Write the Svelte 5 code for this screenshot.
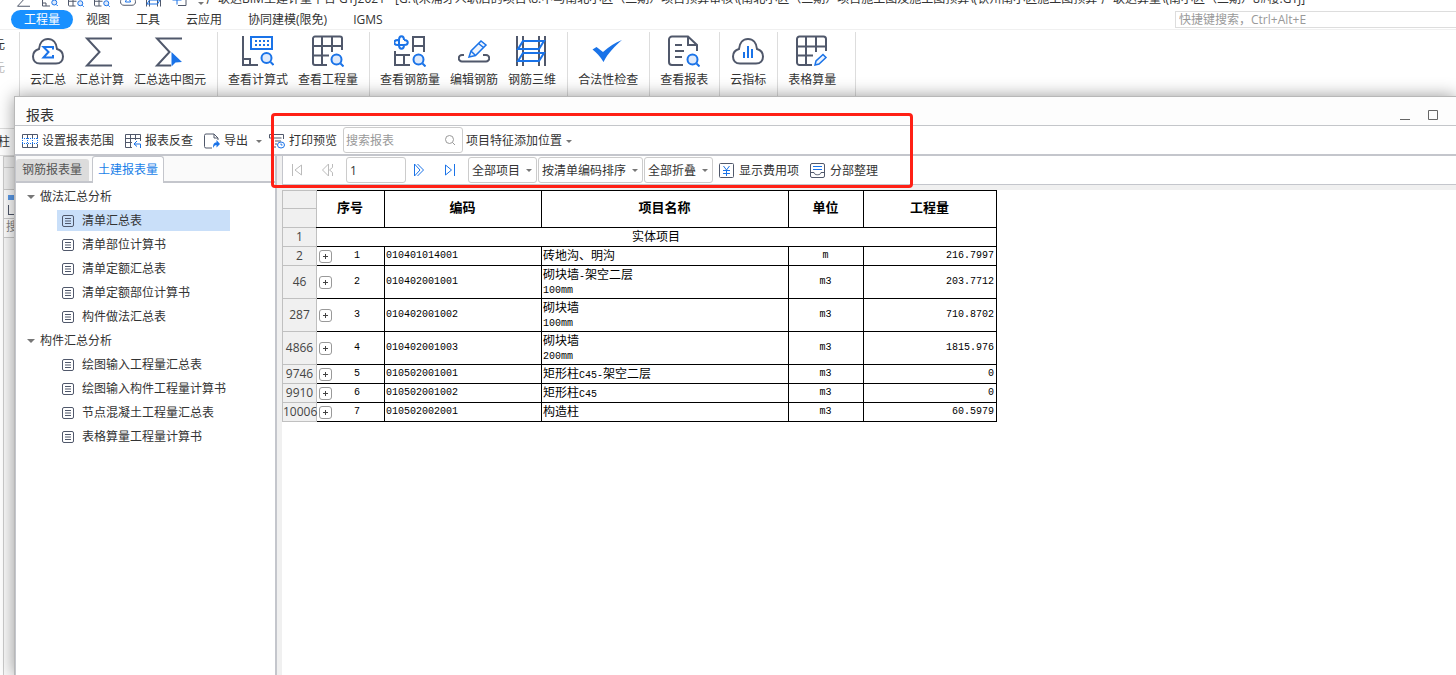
<script lang="ts">
	const quickIcons = ['sum', 'calc', 'grid', 'grid', 'cloud', 'rebar3d', 'addbox'];
	const menus = ['工程量', '视图', '工具', '云应用', '协同建模(限免)', 'IGMS'];

	const ribbon = [
		[
			{ icon: 'cloudsum', label: '云汇总' },
			{ icon: 'sum', label: '汇总计算' },
			{ icon: 'sumselect', label: '汇总选中图元' },
		],
		[
			{ icon: 'calc', label: '查看计算式' },
			{ icon: 'grid', label: '查看工程量' },
		],
		[
			{ icon: 'rebar', label: '查看钢筋量' },
			{ icon: 'edit', label: '编辑钢筋' },
			{ icon: 'rebar3d', label: '钢筋三维' },
		],
		[{ icon: 'check', label: '合法性检查' }],
		[{ icon: 'report', label: '查看报表' }],
		[{ icon: 'cloudstat', label: '云指标' }],
		[{ icon: 'tablepen', label: '表格算量' }],
	];

	const tree = [
		{
			label: '做法汇总分析',
			items: ['清单汇总表', '清单部位计算书', '清单定额汇总表', '清单定额部位计算书', '构件做法汇总表'],
		},
		{
			label: '构件汇总分析',
			items: ['绘图输入工程量汇总表', '绘图输入构件工程量计算书', '节点混凝土工程量汇总表', '表格算量工程量计算书'],
		},
	];

	const rows = [
		{ line: 2, no: 1, code: '010401014001', name: ['砖地沟、明沟'], unit: 'm', qty: '216.7997' },
		{ line: 46, no: 2, code: '010402001001', name: ['砌块墙-架空二层', '100mm'], unit: 'm3', qty: '203.7712' },
		{ line: 287, no: 3, code: '010402001002', name: ['砌块墙', '100mm'], unit: 'm3', qty: '710.8702' },
		{ line: 4866, no: 4, code: '010402001003', name: ['砌块墙', '200mm'], unit: 'm3', qty: '1815.976' },
		{ line: 9746, no: 5, code: '010502001001', name: ['矩形柱C45-架空二层'], unit: 'm3', qty: '0' },
		{ line: 9910, no: 6, code: '010502001002', name: ['矩形柱C45'], unit: 'm3', qty: '0' },
		{ line: 10006, no: 7, code: '010502002001', name: ['构造柱'], unit: 'm3', qty: '60.5979' },
	];

	let activeMenu = $state('工程量');
	let activeTab = $state('土建报表量');
	let selected = $state('清单汇总表');
	let page = $state('1');

	// latin runs use the half-width mono face
	function runs(text: string) {
		return (text.match(/[\x20-\x7e]+|[^\x20-\x7e]+/g) ?? []).map((t) => ({
			text: t,
			latin: t.charCodeAt(0) < 127,
		}));
	}
</script>

{#snippet lens(x, y)}
	<circle class="b lens" cx={x} cy={y} r="5" />
	<path class="b" d="M{x + 4} {y + 4}l3 3" />
{/snippet}

{#snippet cloud()}
	<path d="M8 28.500C3.500 28.500 1 25.500 1 21.500c0-4 2.500-6.500 6-7.500C7.500 8 11 4 16 4s8.500 4 9 10c3.500 1 6 3.500 6 7.500 0 4-2.500 7-7 7z" />
{/snippet}

{#snippet bigIcon(name)}
	<svg class="big" viewBox="0 0 32 32" aria-hidden="true">
		{#if name === 'cloudsum'}
			{@render cloud()}
			<path class="b" d="M21 14.500V12H11.500l5 5-5 5.500H21V20" />
		{:else if name === 'cloud'}
			{@render cloud()}
			<path class="b" d="M11 22c0-7 10-7 10 0z" />
		{:else if name === 'cloudstat'}
			{@render cloud()}
			<path class="b" d="M12 17v6M16 11v12M20 14v9" />
		{:else if name === 'sum'}
			<path d="M28 3.500H3L15.500 17 3 30.500h25" />
		{:else if name === 'sumselect'}
			<path d="M28 3.500H3L15.500 17 3 30.500h14" />
			<path class="f" d="M17.500 17l10.500 10-6.500.500-4 4z" />
		{:else if name === 'calc'}
			<path d="M1 1v29h15M1 24h7v6" />
			<rect class="b" x="9" y="2" width="21" height="12" />
			<path class="b dots" d="M13 6h15M13 10h15" />
			{@render lens(24.5, 23)}
		{:else if name === 'grid'}
			<path d="M30 15V3.500a2 2 0 0 0-2-2H3a2 2 0 0 0-2 2V28a2 2 0 0 0 2 2h12M1 11h29M1 20.500h16M10 1.500V30M20 1.500V17" />
			{@render lens(24.5, 24.5)}
		{:else if name === 'rebar'}
			<path d="M19 17V2h11v15M19 11h11M1 16v14h15M1 20h15M10 20v10" />
			<path class="b" d="M10 5c0-5-5-5-5 0v5c0 5 5 5 5 0M4 5c-5 0-5 5 0 5h6c5 0 5-5 0-5" />
			{@render lens(24.5, 24.5)}
		{:else if name === 'edit'}
			<path d="M6 20H4a3 3 0 0 0 0 6.500h24a3 3 0 0 0 0-6.500h-3" />
			<path class="b pen" d="M11 22l2-6L23 6l5 4-10.500 10.500zM20.500 8.500l5 4M13 16l4.500 4.500" />
		{:else if name === 'rebar3d'}
			<path d="M1 1v30M7 1v30M23 1v30M29 1v30" />
			<path class="b" d="M7 6h21l-5 8H2zM7 18h21l-5 8H2z" />
		{:else if name === 'check'}
			<path class="f" d="M.500 14.500l4-2.500 6.500 5C17 11.500 23 7.500 30 5 23 11 16 18 11.500 27 8 21 4.500 17.500.500 14.500z" />
		{:else if name === 'report'}
			<path d="M15 30H4a3 3 0 0 1-3-3V4.500a3 3 0 0 1 3-3h16l9 8.500v6M20 1.500V10h9M7 10h7M7 16h9M7 22h7" />
			{@render lens(24.5, 24.5)}
		{:else if name === 'tablepen'}
			<path d="M30 16V4a2.500 2.500 0 0 0-2.500-2.500h-24A2.500 2.500 0 0 0 1 4v23.500A2.500 2.500 0 0 0 3.500 30H16M1 11.500h29M1 20.500h16M10 1.500V30M20 1.500V17" />
			<path class="b pen" d="M19 30l1-4 7-6.500 3 3-7 6.500z" />
		{:else if name === 'addbox'}
			<path d="M18 2h10v27H12" />
			<path class="b" d="M1 18h18M10 9v18" />
		{/if}
	</svg>
{/snippet}

{#snippet smallIcon(name)}
	<svg class="small" viewBox="0 0 16 16" aria-hidden="true">
		{#if name === 'range'}
			<path d="M.500 5V1.500h15V5M.500 11v3.500h15V11M5.500 1.500V5M10.500 1.500V5M5.500 11v3.500M10.500 11v3.500" />
			<path class="b dash" d="M0 5.500h16M0 10.500h16" />
			<path class="b dash" d="M.500 5v6M5.500 5v6M10.500 5v6M15.500 5v6" />
		{:else if name === 'back'}
			<path d="M15.500 8V1.500H.500v13H7M.500 5.500h15M.500 9.500H7M5.500 1.500v13M10.500 1.500V7" />
			<path class="b" d="M12 8l-3 3 3 2.500M9 11h6.500v4" />
		{:else if name === 'export'}
			<path d="M8 15H2a1.500 1.500 0 0 1-1.500-1.500v-11A1.500 1.500 0 0 1 2 1h8l4 4v2M10 1v4h4" />
			<path class="f" d="M9 15c0-4 1-5.500 3.500-5.500V7l3.500 4-3.500 3.500V12C11 12 10 13 9 15z" />
		{:else if name === 'print'}
			<path d="M.500 5V1.500h14V6M.500 5h12M3.500 5v9H7M6 8h6M6 11h2" />
			<ellipse class="b" cx="12" cy="12" rx="3.500" ry="3" />
			<path class="b" d="M12 10.500V12h1.500" />
		{:else if name === 'fee'}
			<rect x=".5" y=".5" width="14" height="14" rx="1" />
			<path class="b" d="M4.500 3l3 4 3-4M4 7.500h7M4 10.500h7M7.500 7v6" />
		{:else if name === 'tidy'}
			<rect x=".5" y=".5" width="14" height="14" rx="1.500" />
			<path d="M.500 9.500H4c0 3 7 3 7 0h3.500" />
			<path class="b" d="M3 3.500h9M3 6.500h9" />
		{:else if name === 'first'}
			<path class="g" d="M3.500 2v12M12.500 3v10L6 8z" />
		{:else if name === 'prev'}
			<path class="g" d="M8.500 2v12L2.500 8zM12.500 2v3.500L9.500 8l3 2.500V14" />
		{:else if name === 'next'}
			<path class="b" d="M3.500 2v12l5.500-6zM6.500 2l6 6-6 6" />
		{:else if name === 'last'}
			<path class="b" d="M3.500 3v10l6-5zM12.500 2v12" />
		{:else if name === 'sheet'}
			<rect x="2.5" y="2.5" width="11" height="11" rx="1.500" />
			<path d="M5 5.500h6M5 8h6M5 10.500h6" />
		{:else if name === 'search'}
			<circle class="gray" cx="7.500" cy="7.500" r="4" />
			<path class="gray" d="M10.500 10.500l2.500 2.500" />
		{/if}
	</svg>
{/snippet}

<div class="window">
	<header class="titlebar">
		<div class="quick">
			{#each quickIcons as name}
				{@render bigIcon(name)}
			{/each}
			<i class="caret"></i>
		</div>
		<span class="title">广联达BIM土建计量平台 GTJ2021 - [G:\(未浦牙人职后的项目\8.中马南北小区（二期）项目预算审核\(南北小区（二期）项目施工图及施工图预算\(钦州南小区施工图预算-广联达算量\(南小区（二期）8#楼.GTJ]</span>
	</header>

	<nav class="menubar">
		{#each menus as m}
			<button class="menu" class:active={activeMenu === m} onclick={() => (activeMenu = m)}>{m}</button>
		{/each}
		<input class="shortcut" type="text" placeholder="快捷键搜索，Ctrl+Alt+E" aria-label="快捷键搜索" />
	</nav>

	<div class="ribbon">
		<div class="cut">
			<span>元</span>
			<span class="off">元</span>
		</div>
		{#each ribbon as group}
			<div class="group">
				{#each group as item}
					<button class="tool">
						{@render bigIcon(item.icon)}
						<span>{item.label}</span>
					</button>
				{/each}
			</div>
		{/each}
	</div>

	<aside class="backdrop">
		<div class="dock">柱</div>
		<div class="dock-head"></div>
		<div class="dock-tab"></div>
		<div class="dock-icon"></div>
		<div class="dock-search">搜</div>
		<div class="dock-body"></div>
	</aside>

	<div class="dialog" role="dialog" aria-label="报表">
		<div class="dialog-title">
			<h1>报表</h1>
			<button class="win" aria-label="最小化"><svg viewBox="0 0 12 12"><path d="M1 10.500h10" /></svg></button>
			<button class="win" aria-label="最大化"><svg viewBox="0 0 12 12"><path d="M1.500 1.500h9v9h-9z" /></svg></button>
		</div>

		<div class="toolbar">
			<button class="action">{@render smallIcon('range')}设置报表范围</button>
			<button class="action">{@render smallIcon('back')}报表反查</button>
			<button class="action export">{@render smallIcon('export')}导出<i class="caret"></i></button>
			<button class="action">{@render smallIcon('print')}打印预览</button>
			<label class="search">
				<input type="text" placeholder="搜索报表" aria-label="搜索报表" />
				{@render smallIcon('search')}
			</label>
			<button class="action feature">项目特征添加位置<i class="caret"></i></button>
		</div>

		<div class="body">
			<div class="side">
				<div class="tabs" role="tablist">
					{#each ['钢筋报表量', '土建报表量'] as t}
						<button role="tab" aria-selected={activeTab === t} class="tab" class:active={activeTab === t} onclick={() => (activeTab = t)}>{t}</button>
					{/each}
				</div>
				<div class="tree">
					{#each tree as branch}
						<button class="branch"><i class="caret"></i>{branch.label}</button>
						{#each branch.items as leaf}
							<button class="leaf" class:selected={selected === leaf} onclick={() => (selected = leaf)}>
								{@render smallIcon('sheet')}{leaf}
							</button>
						{/each}
					{/each}
				</div>
			</div>

			<main class="content">
				<div class="pager">
					<button class="page" aria-label="首页">{@render smallIcon('first')}</button>
					<button class="page" aria-label="上一页">{@render smallIcon('prev')}</button>
					<input class="page-no" type="text" bind:value={page} aria-label="页码" />
					<button class="page" aria-label="下一页">{@render smallIcon('next')}</button>
					<button class="page" aria-label="末页">{@render smallIcon('last')}</button>
					<div class="selects">
						{#each ['全部项目', '按清单编码排序', '全部折叠'] as s}
							<div class="select">
								<select aria-label={s}><option>{s}</option></select>
								<i class="caret"></i>
							</div>
						{/each}
					</div>
					<button class="action">{@render smallIcon('fee')}显示费用项</button>
					<button class="action">{@render smallIcon('tidy')}分部整理</button>
				</div>

				<div class="sheet">
					<table>
						<colgroup>
							<col class="c-line" />
							<col class="c-no" />
							<col class="c-code" />
							<col class="c-name" />
							<col class="c-unit" />
							<col class="c-qty" />
						</colgroup>
						<thead>
							<tr class="h1">
								<td class="line"></td>
								<th class="first" rowspan="2">序号</th>
								<th rowspan="2">编码</th>
								<th rowspan="2">项目名称</th>
								<th rowspan="2">单位</th>
								<th rowspan="2">工程量</th>
							</tr>
							<tr><td class="line"></td></tr>
						</thead>
						<tbody>
							<tr>
								<td class="line">1</td>
								<td class="first section" colspan="5">实体项目</td>
							</tr>
							{#each rows as r}
								<tr class:tall={r.name.length > 1}>
									<td class="line">{r.line}</td>
									<td class="first no">
										<div>
											<button class="expand" aria-label="展开"><svg viewBox="0 0 11 11"><path d="M3 5.500h5M5.500 3v5" /></svg></button>
											<span>{r.no}</span>
										</div>
									</td>
									<td class="mono">{r.code}</td>
									<td class="name">
										{#each r.name as text}
											<div>{#each runs(text) as run}<span class:mono={run.latin}>{run.text}</span>{/each}</div>
										{/each}
									</td>
									<td class="mono unit">{r.unit}</td>
									<td class="mono qty">{r.qty}</td>
								</tr>
							{/each}
						</tbody>
					</table>
				</div>
			</main>
		</div>

		<div class="marker"></div>
	</div>
</div>

<style>
	:global(body) {
		margin: 0;
		background: #fff;
	}

	.window {
		position: relative;
		height: 100vh;
		overflow: hidden;
		display: flex;
		flex-direction: column;
		background: #fff;
		color: #333;
		font: 12px/16px "Open Sans", "Noto Sans CJK SC", sans-serif;
	}

	.window * {
		box-sizing: border-box;
	}

	button,
	input,
	select {
		font: inherit;
		color: inherit;
		margin: 0;
		outline: none;
	}

	button {
		border: 0;
		padding: 0;
		background: none;
		white-space: nowrap;
	}

	svg {
		display: block;
		flex: none;
		fill: none;
		stroke: #50586b;
		stroke-width: 1;
	}

	.big {
		width: 32px;
		height: 32px;
		stroke-width: 2;
	}

	.small {
		width: 16px;
		height: 16px;
	}

	svg .b {
		stroke: #1a73e8;
	}

	svg .f {
		fill: #1a73e8;
		stroke: none;
	}

	svg .g {
		stroke: #bbb;
	}

	svg .gray {
		stroke: #999;
	}

	svg .lens {
		fill: #dfeafb;
	}

	svg .pen {
		fill: #eef4fd;
		stroke-width: 1.5;
	}

	svg .dots {
		stroke-dasharray: 2 2;
	}

	svg .dash {
		stroke-dasharray: 1 1;
	}

	.caret {
		flex: none;
		width: 0;
		height: 0;
		border: 3px solid transparent;
		border-top-color: #777;
		border-bottom: 0;
	}

	/* main window */
	.titlebar {
		flex: none;
		display: flex;
		align-items: flex-end;
		height: 9px;
		padding: 0 0 2px 16px;
		overflow: hidden;
	}

	.quick {
		display: flex;
		align-items: flex-end;
		gap: 10px;
	}

	.quick .big {
		width: 16px;
		height: 16px;
	}

	.quick .caret {
		margin-bottom: 2px;
	}

	.title {
		margin-left: 2px;
		white-space: nowrap;
	}

	.menubar {
		flex: none;
		display: flex;
		align-items: center;
		height: 21px;
		padding-left: 11px;
		border-bottom: 1px solid #f0f0f0;
	}

	.menu {
		height: 19px;
		padding: 0 13px;
		line-height: 20px;
	}

	.menu.active {
		border-radius: 10px;
		background: #1890ff;
		color: #fff;
	}

	.shortcut {
		width: 281px;
		height: 17px;
		margin-left: auto;
		padding: 0 3px;
		border: 1px solid #ddd;
		border-right: 0;
	}

	.shortcut::placeholder,
	.search input::placeholder {
		color: #999;
		opacity: 1;
	}

	.ribbon {
		flex: none;
		display: flex;
		height: 66px;
		padding-top: 2px;
	}

	.cut {
		display: flex;
		flex-direction: column;
		align-items: flex-end;
		gap: 7px;
		width: 20px;
		padding: 5px 14px 0 0;
		border-right: 1px solid #ddd;
	}

	.cut .off {
		color: #bbb;
	}

	.group {
		display: flex;
		gap: 10px;
		padding: 0 11px 0 10px;
		border-right: 1px solid #ddd;
	}

	.group:last-child {
		padding-right: 19px;
	}

	.tool {
		display: flex;
		flex-direction: column;
		align-items: center;
		gap: 5px;
		padding-top: 3px;
	}

	.backdrop {
		flex: 1;
		display: flex;
		flex-direction: column;
		width: 19px;
		padding-top: 32px;
		color: #333;
	}

	.dock {
		display: flex;
		align-items: center;
		justify-content: flex-end;
		height: 28px;
		padding-right: 9px;
		border-top: 1px solid #ddd;
		border-bottom: 1px solid #ddd;
	}

	.dock-head,
	.dock-tab,
	.dock-icon,
	.dock-search,
	.dock-body {
		margin-left: 3px;
		border: 1px solid #ccc;
		border-bottom: 0;
	}

	.dock-head {
		height: 11px;
		background: #eee;
	}

	.dock-tab {
		height: 22px;
		background: #f2f2f2;
	}

	.dock-icon {
		height: 29px;
		padding: 5px 4px;
	}

	.dock-icon::before {
		content: "";
		display: block;
		height: 5px;
		background: #5b9bea;
	}

	.dock-icon::after {
		content: "";
		display: block;
		height: 9px;
		margin-top: 5px;
		border: solid #50586b;
		border-width: 0 0 1px 1px;
	}

	.dock-search {
		height: 19px;
		padding-left: 2px;
		color: #888;
		overflow: hidden;
	}

	.dock-body {
		flex: 1;
		background: #fafafa;
	}

	/* report window */
	.dialog {
		position: absolute;
		inset: 96px 0 0 14px;
		display: flex;
		flex-direction: column;
		background: #fff;
		border: solid #b8b8b8;
		border-width: 1px 0 0 1px;
		box-shadow: 0 0 16px rgba(0, 0, 0, 0.4);
	}

	.dialog-title {
		flex: none;
		display: flex;
		align-items: center;
		gap: 16px;
		height: 29px;
		padding: 8px 17px 0 11px;
		border-bottom: 1px solid #c4c6ca;
		background: #fdfdfd;
	}

	h1 {
		flex: 1;
		margin: 0;
		font-size: 14px;
		font-weight: 400;
		line-height: 22px;
	}

	.win svg {
		width: 12px;
		height: 12px;
		stroke: #666;
	}

	.toolbar {
		flex: none;
		display: flex;
		align-items: center;
		height: 30px;
		padding-left: 7px;
		border-bottom: 2px solid #c4c6cc;
	}

	.action {
		display: flex;
		align-items: center;
		gap: 4px;
		margin-right: 11px;
		padding-top: 2px;
	}

	.export {
		margin-right: 7px;
	}

	.export .caret {
		margin-left: 4px;
	}

	.toolbar .search {
		display: flex;
		align-items: center;
		width: 120px;
		height: 26px;
		margin: 0 3px 0 -5px;
		padding: 0 4px 0 2px;
		border: 1px solid #ccc;
		border-radius: 3px;
	}

	.search input {
		flex: 1;
		min-width: 0;
		padding: 2px 0 0;
		border: 0;
		background: none;
	}

	.body {
		flex: 1;
		display: flex;
		min-height: 0;
		background: #f0f0f0;
	}

	.side {
		display: flex;
		flex-direction: column;
		flex: none;
		width: 262px;
		border-left: 1px solid #c4c6cc;
		border-right: 2px solid #c4c6cc;
	}

	.tabs {
		display: flex;
		align-items: flex-end;
		gap: 3px;
		height: 27px;
		border-bottom: 2px solid #c4c6cc;
		background: #fafafa;
	}

	.tab {
		height: 22px;
		padding: 0 7px 0 6px;
		border-radius: 3px 3px 0 0;
		background: #dcdcdc;
		color: #555;
	}

	.tab.active {
		height: 27px;
		margin-bottom: -2px;
		padding: 0 5px;
		border: 1px solid #c4c6cc;
		border-bottom: 0;
		background: #fff;
		color: #1a7fe8;
	}

	.tree {
		flex: 1;
		display: flex;
		flex-direction: column;
		align-items: flex-start;
		padding-top: 2px;
		background: #fff;
	}

	.branch {
		display: flex;
		align-items: center;
		gap: 5px;
		height: 24px;
		padding-left: 11px;
	}

	.branch .caret {
		border-width: 4px 4px 0;
	}

	.leaf {
		display: flex;
		align-items: center;
		gap: 6px;
		width: 173px;
		height: 21px;
		margin: 1px 0 2px 41px;
		padding-left: 3px;
	}

	.leaf.selected {
		background: #c9dff9;
	}

	.content {
		flex: 1;
		display: flex;
		flex-direction: column;
		min-width: 0;
		padding-left: 5px;
	}

	.pager {
		flex: none;
		display: flex;
		align-items: center;
		height: 29px;
		padding-left: 6px;
		border-left: 1px solid #c4c6cc;
		border-bottom: 1px solid #c4c6cc;
		background: #fff;
	}

	.page {
		margin-right: 15px;
	}

	.page-no {
		width: 60px;
		height: 26px;
		margin: 0 5px 0 -5px;
		padding: 0 3px;
		border: 1px solid #ccc;
		border-radius: 3px;
	}

	.selects {
		display: flex;
		gap: 1px;
		margin: 0 6px 0 -5px;
	}

	.select {
		display: flex;
		align-items: center;
		height: 26px;
		padding-right: 4px;
		border: 1px solid #ccc;
		border-radius: 3px;
	}

	select {
		height: 24px;
		padding: 1px 5px 0 3px;
		border: 0;
		background: none;
		appearance: none;
	}

	.sheet {
		flex: 1;
		margin-top: 5px;
		background: #fff;
	}

	table {
		width: 715px;
		table-layout: fixed;
		border-collapse: collapse;
		color: #000;
	}

	.c-line {
		width: 34px;
	}

	.c-no {
		width: 68px;
	}

	.c-code {
		width: 157px;
	}

	.c-name {
		width: 247px;
	}

	.c-unit {
		width: 75px;
	}

	.c-qty {
		width: 133px;
	}

	tr {
		height: 19px;
	}

	tr.h1 {
		height: 18px;
	}

	tr.tall {
		height: 33px;
	}

	td,
	th {
		padding: 0 2px 0 1px;
		border: 1px solid #000;
		line-height: 14px;
	}

	th {
		padding-bottom: 4px;
		font-size: 13px;
	}

	.line {
		padding: 0;
		border-color: #c0c0c0;
		background: #f0f0f0;
		color: #444;
		text-align: center;
	}

	.first {
		border-left-color: #c0c0c0;
	}

	.section {
		text-align: center;
	}

	.mono {
		font-family: "Liberation Mono", monospace;
		font-size: 10px;
	}

	.name div {
		height: 14px;
	}

	.no div {
		display: flex;
		align-items: center;
		height: 14px;
		padding-left: 1px;
	}

	.no span {
		flex: 1;
		text-align: center;
		font: 10px/14px "Liberation Mono", monospace;
	}

	.expand svg {
		width: 13px;
		height: 13px;
		border: 1px solid #999;
		border-radius: 3px;
		stroke: #444;
	}

	.unit {
		text-align: center;
	}

	.qty {
		text-align: right;
	}

	/* red callout drawn across both tool rows */
	.marker {
		position: absolute;
		left: 256px;
		top: 16px;
		width: 642px;
		height: 75px;
		border: 3px solid #ff2015;
		border-radius: 4px;
		pointer-events: none;
	}
</style>
